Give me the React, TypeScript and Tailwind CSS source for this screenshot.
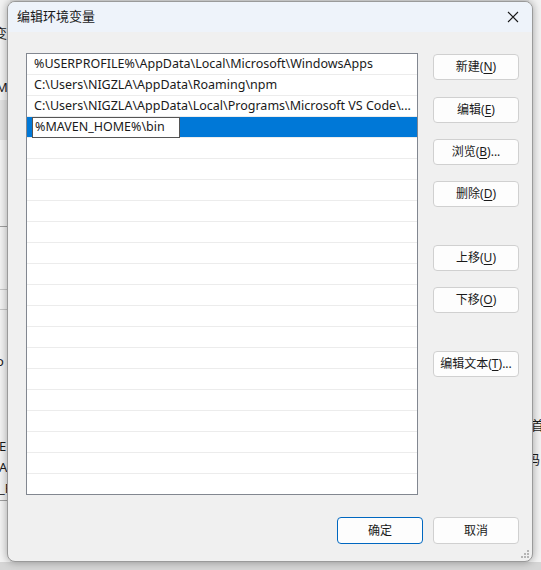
import React from "react";

const FONT = { fontFamily: '"Segoe UI", "Noto Sans", "Noto Sans CJK SC", sans-serif' };

const rows = [
  "%USERPROFILE%\\AppData\\Local\\Microsoft\\WindowsApps",
  "C:\\Users\\NIGZLA\\AppData\\Roaming\\npm",
  "C:\\Users\\NIGZLA\\AppData\\Local\\Programs\\Microsoft VS Code\\...",
];

function Btn({ label, k, suffix = "", className = "" }: { label: string; k: string; suffix?: string; className?: string }) {
  return (
    <button
      className={
        "h-[26px] w-[86px] rounded-[4px] border border-[#d0d0d0] bg-[#fdfdfd] text-[12px] text-[#1a1a1a] flex items-center justify-center " +
        className
      }
    >
      {label}(<span className="underline underline-offset-2">{k}</span>){suffix}
    </button>
  );
}

export default function App() {
  const empty = Array.from({ length: 17 });
  return (
    <div className="relative w-[541px] h-[570px] overflow-hidden bg-[#e6e6e6]" style={FONT}>
      {/* window behind */}
      <div className="absolute left-0 top-0 w-[10px] h-[570px] bg-[#f3f3f3] text-[13px] text-[#1a1a1a] overflow-hidden">
        <div className="absolute left-[-6px] top-[24px]">变</div>
        <div className="absolute left-[-4px] top-[78px]">ME</div>
        <div className="absolute left-0 top-[100px] h-[40px] w-full bg-[#e3e3e3]" />
        <div className="absolute left-0 top-[226px] h-px w-full bg-[#a0a0a0]" />
        <div className="absolute left-0 top-[289px] h-px w-full bg-[#c8c8c8]" />
        <div className="absolute left-0 top-[309px] h-px w-full bg-[#c8c8c8]" />
        <div className="absolute left-[-4px] top-[352px]">o</div>
        <div className="absolute left-[-1px] top-[437px]">E</div>
        <div className="absolute left-[-1px] top-[458px]">A</div>
        <div className="absolute left-[-1px] top-[479px]">_F</div>
        <div className="absolute left-0 top-[500px] h-px w-full bg-[#a0a0a0]" />
      </div>
      <div className="absolute right-0 top-0 w-[12px] h-[570px] bg-[#f3f3f3] text-[13px] text-[#1a1a1a] overflow-hidden">
        <div className="absolute left-[2px] top-[416px]">首</div>
        <div className="absolute left-[-2px] top-[450px]">码</div>
      </div>
      <div className="absolute left-0 bottom-0 w-full h-[8px] bg-[#d6d6d6]" />

      {/* dialog */}
      <div className="absolute left-[7px] top-[1px] w-[526px] h-[561px] rounded-[8px] border border-[#9a9a9a] bg-[#f0f0f0] shadow-[0_0_8px_rgba(0,0,0,0.35)] overflow-hidden flex flex-col">
        <div className="h-[30px] bg-[#eef3fa] flex items-center justify-between pl-[9px] pr-[12px]">
          <span className="text-[13px] text-[#1a1a1a]">编辑环境变量</span>
          <svg width="12" height="12" viewBox="0 0 12 12" className="mr-[1px]">
            <path d="M1 1 L11 11 M11 1 L1 11" stroke="#1a1a1a" strokeWidth="1.1" />
          </svg>
        </div>

        <div className="flex pl-[18px] pt-[21px]">
          <div className="w-[392px] h-[442px] border border-[#828790] bg-white overflow-hidden text-[12.5px] text-[#1a1a1a]">
            {rows.map((r) => (
              <div key={r} className="h-[21px] border-b border-[#ececec] pl-[7px] pt-px flex items-center whitespace-nowrap overflow-hidden">
                {r}
              </div>
            ))}
            <div className="h-[21px] bg-[#0078d7] border-b border-[#ececec] pl-[5px] flex items-center">
              <div className="h-[21px] w-[148px] bg-white border border-[#555] flex items-center pl-[2px]">
                %MAVEN_HOME%\bin
              </div>
            </div>
            {empty.map((_, i) => (
              <div key={i} className="h-[21px] border-b border-[#ececec]" />
            ))}
          </div>

          <div className="ml-[15px] mt-[1px] flex flex-col">
            <Btn label="新建" k="N" />
            <Btn label="编辑" k="E" className="mt-[17px]" />
            <Btn label="浏览" k="B" suffix="..." className="mt-[16px]" />
            <Btn label="删除" k="D" className="mt-[16px]" />
            <Btn label="上移" k="U" className="mt-[38px]" />
            <Btn label="下移" k="O" className="mt-[16px]" />
            <Btn label="编辑文本" k="T" suffix="..." className="mt-[38px]" />
          </div>
        </div>

        <div className="flex justify-end gap-[10px] pr-[13px] mt-[22px]">
          <button className="h-[27px] w-[86px] rounded-[4px] border border-[#0067c0] bg-[#fdfdfd] text-[12px] text-[#1a1a1a]">
            确定
          </button>
          <button className="h-[27px] w-[86px] rounded-[4px] border border-[#d0d0d0] bg-[#fdfdfd] text-[12px] text-[#1a1a1a]">
            取消
          </button>
        </div>

        <svg width="8" height="8" viewBox="0 0 8 8" className="absolute right-[3px] bottom-[3px]">
          {[
            [6, 0], [6, 3], [3, 3], [6, 6], [3, 6], [0, 6],
          ].map(([x, y], i) => (
            <rect key={i} x={x} y={y} width="2" height="2" fill="#b5b5b5" />
          ))}
        </svg>
      </div>
    </div>
  );
}
